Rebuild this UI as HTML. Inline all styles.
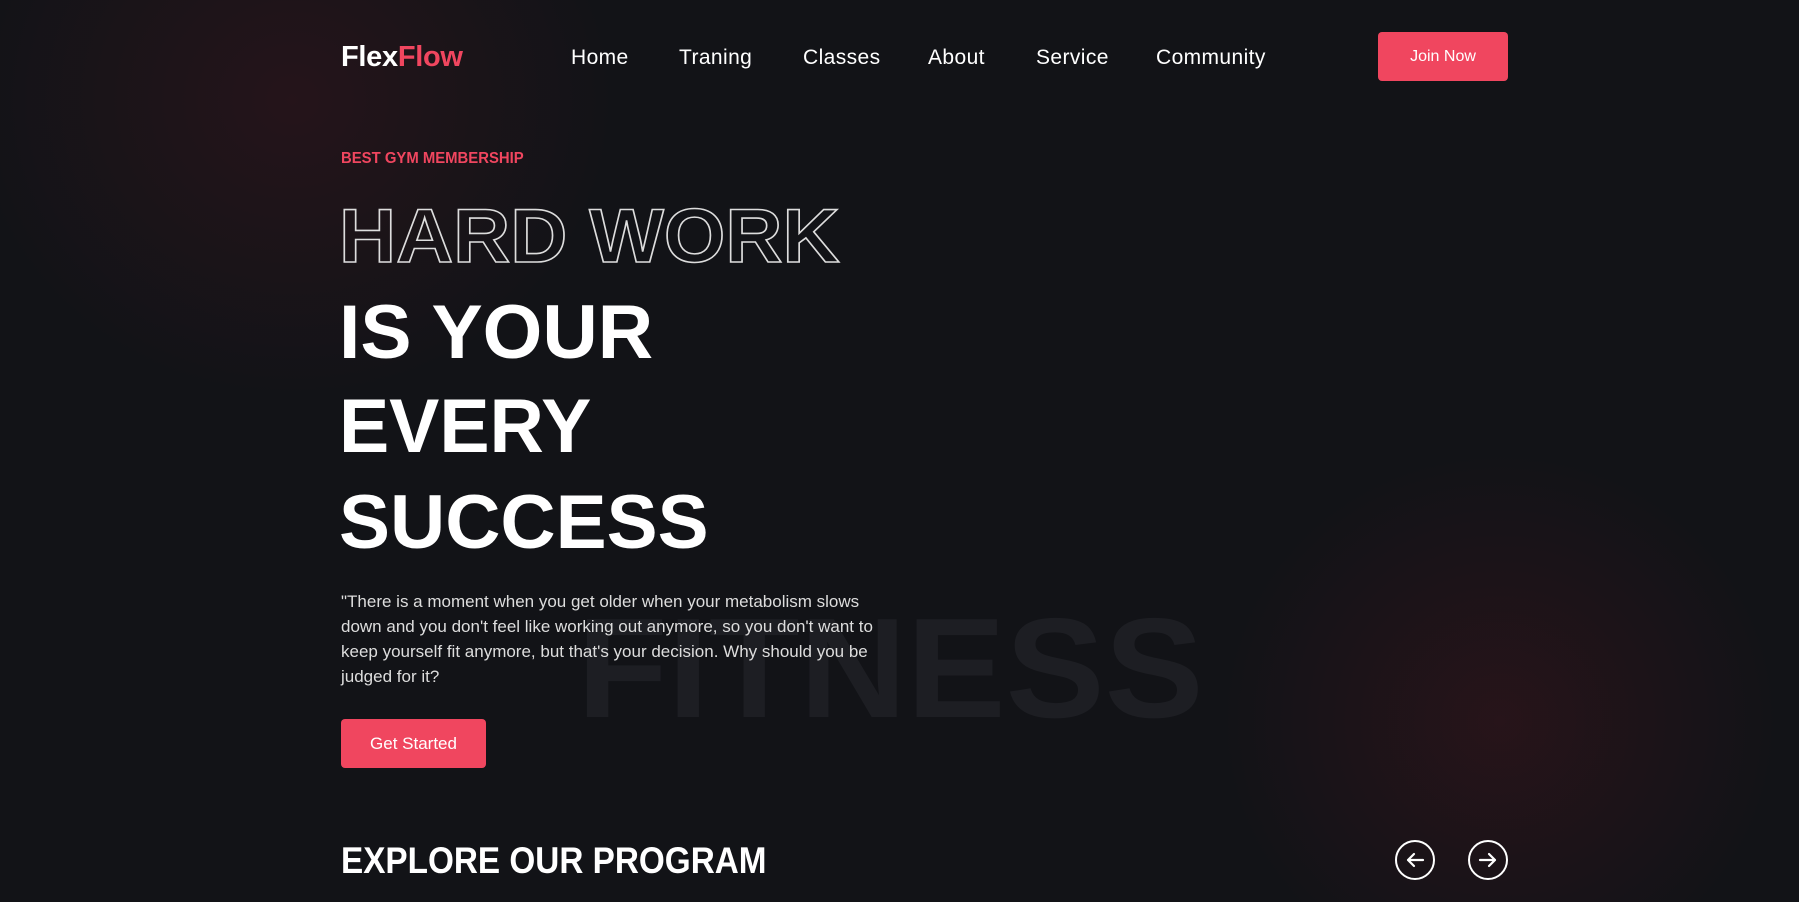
<!DOCTYPE html>
<html><head><meta charset="utf-8"><style>
*{margin:0;padding:0;box-sizing:border-box}
html,body{width:1799px;height:902px;overflow:hidden}
body{background:#121317;font-family:"Liberation Sans",sans-serif;color:#fff;position:relative}
.glow1{position:absolute;left:0;top:0;width:650px;height:400px;background:radial-gradient(ellipse 325px 300px at 45% 25%,rgba(60,22,30,.45),rgba(18,19,23,0))}
.glow2{position:absolute;left:1220px;top:450px;width:560px;height:452px;background:radial-gradient(ellipse 280px 270px at 50% 60%,rgba(60,20,28,.5),rgba(18,19,23,0))}
.a{position:absolute;white-space:nowrap;transform-origin:left}
.logo{left:341px;top:41px;font-size:29px;font-weight:bold;letter-spacing:-0.3px}
.logo span{color:#f0465f}
.nav{top:46px;font-size:21px;letter-spacing:0.4px}
.btn{position:absolute;background:#f0465f;border-radius:4px;color:#fff;display:flex;align-items:center;justify-content:center}
.tag{left:341px;top:150px;font-size:16px;font-weight:bold;color:#f0465f;transform:scaleX(.93)}
.big{left:339px;font-size:76px;font-weight:bold;line-height:1}
.out{color:transparent;-webkit-text-stroke:1.6px #ddd}
.p{left:341px;top:589px;font-size:17px;line-height:25px;color:#ddd}
.fit{left:577px;top:587px;font-size:142px;font-weight:bold;color:#1d1e23;transform:scaleX(1.045)}
.circ{position:absolute;width:40px;height:40px;border:2px solid #fff;border-radius:50%;top:840px}
</style></head><body>
<div class="glow1"></div><div class="glow2"></div>
<div class="a fit">FITNESS</div>
<div class="a logo">Flex<span>Flow</span></div>
<div class="a nav" style="left:571px">Home</div>
<div class="a nav" style="left:679px">Traning</div>
<div class="a nav" style="left:803px">Classes</div>
<div class="a nav" style="left:928px">About</div>
<div class="a nav" style="left:1036px">Service</div>
<div class="a nav" style="left:1156px">Community</div>
<div class="btn" style="left:1378px;top:32px;width:130px;height:49px;font-size:16px">Join Now</div>
<div class="a tag">BEST GYM MEMBERSHIP</div>
<div class="a big out" style="top:199px;transform:scaleX(1.04)">HARD WORK</div>
<div class="a big" style="top:295px;transform:scaleX(1.01)">IS YOUR</div>
<div class="a big" style="top:389px;transform:scaleX(.99)">EVERY</div>
<div class="a big" style="top:485px;transform:scaleX(1.006)">SUCCESS</div>
<div class="a p">"There is a moment when you get older when your metabolism slows<br>down and you don't feel like working out anymore, so you don't want to<br>keep yourself fit anymore, but that's your decision. Why should you be<br>judged for it?</div>
<div class="btn" style="left:341px;top:719px;width:145px;height:49px;font-size:17px">Get Started</div>
<div class="a" style="left:341px;top:840px;font-size:37px;font-weight:bold;transform:scaleX(.9)">EXPLORE OUR PROGRAM</div>
<div class="circ" style="left:1395px"><svg width="36" height="36" viewBox="0 0 36 36"><path d="M26 18H11M17 12l-6 6 6 6" stroke="#fff" stroke-width="2.2" fill="none" stroke-linecap="round" stroke-linejoin="round"/></svg></div>
<div class="circ" style="left:1468px"><svg width="36" height="36" viewBox="0 0 36 36"><path d="M10 18h15M19 12l6 6-6 6" stroke="#fff" stroke-width="2.2" fill="none" stroke-linecap="round" stroke-linejoin="round"/></svg></div>
</body></html>
